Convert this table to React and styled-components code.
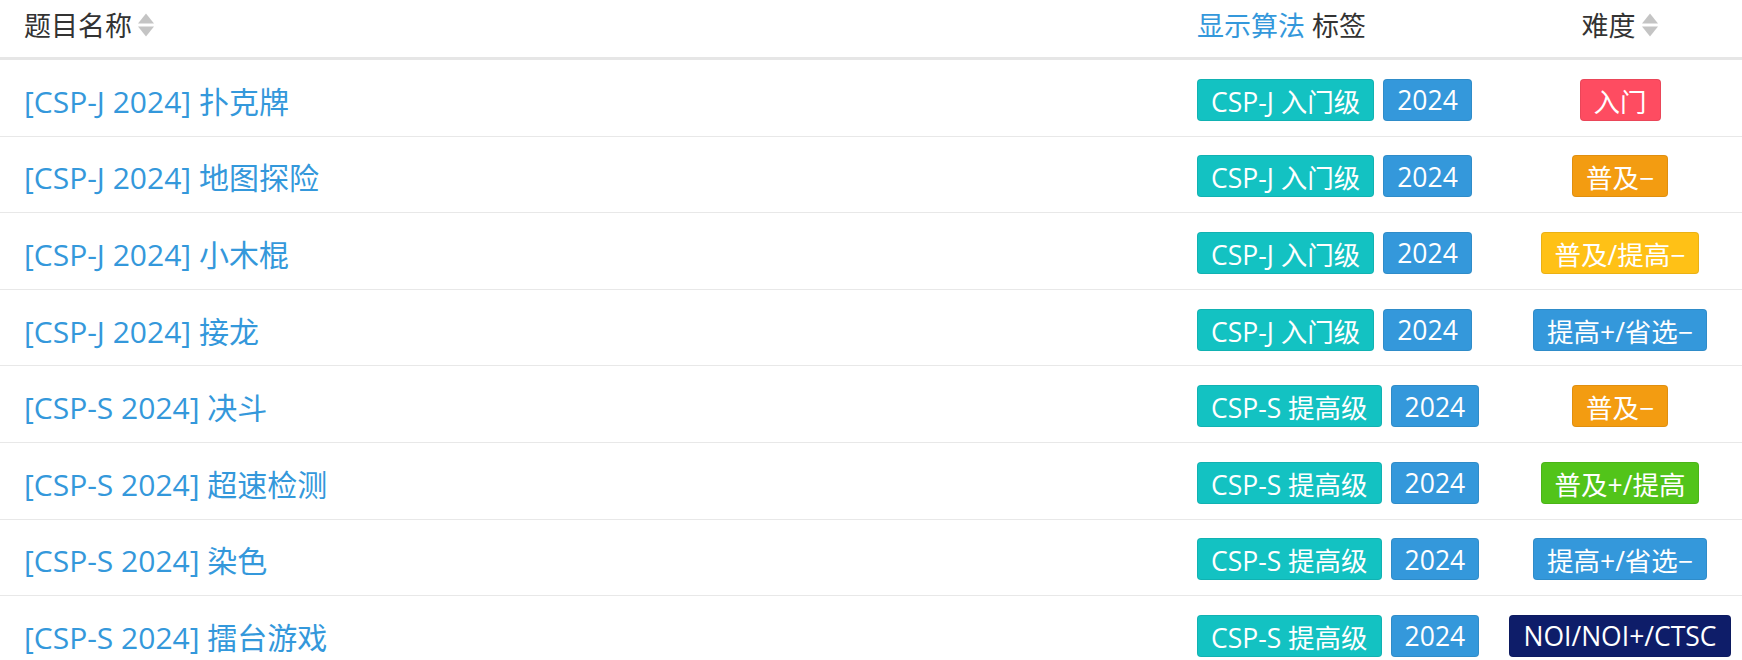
import React from 'react';
import styled, { createGlobalStyle } from 'styled-components';

const GlobalStyle = createGlobalStyle`
  body {
    margin: 0;
    background: #fff;
    font-family: "Open Sans", "Noto Sans CJK SC", sans-serif;
    color: #333;
  }
`;

const problems = [
  { title: '[CSP-J 2024] 扑克牌', level: 'CSP-J 入门级', diff: 0 },
  { title: '[CSP-J 2024] 地图探险', level: 'CSP-J 入门级', diff: 1 },
  { title: '[CSP-J 2024] 小木棍', level: 'CSP-J 入门级', diff: 2 },
  { title: '[CSP-J 2024] 接龙', level: 'CSP-J 入门级', diff: 4 },
  { title: '[CSP-S 2024] 决斗', level: 'CSP-S 提高级', diff: 1 },
  { title: '[CSP-S 2024] 超速检测', level: 'CSP-S 提高级', diff: 3 },
  { title: '[CSP-S 2024] 染色', level: 'CSP-S 提高级', diff: 4 },
  { title: '[CSP-S 2024] 擂台游戏', level: 'CSP-S 提高级', diff: 6 },
];

const difficulties = [
  { name: '入门', color: '#fe4c61' },
  { name: '普及−', color: '#f39c11' },
  { name: '普及/提高−', color: '#ffc116' },
  { name: '普及+/提高', color: '#52c41a' },
  { name: '提高+/省选−', color: '#3498db' },
  { name: '省选/NOI−', color: '#9d3dcf' },
  { name: 'NOI/NOI+/CTSC', color: '#0e1d69' },
];

function SortIcon() {
  return (
    <SortSvg viewBox="0 0 18 24" width="18" height="24">
      <path d="M9 0.5 L17 10.5 L1 10.5 Z" fill="#c4c4c4" />
      <path d="M9 23.5 L17 13.5 L1 13.5 Z" fill="#c4c4c4" />
    </SortSvg>
  );
}

function App() {
  return (
    <>
      <GlobalStyle />
      <Table>
        <HeadRow>
          <HeadCell>
            题目名称<SortIcon />
          </HeadCell>
          <HeadCell>
            <Toggle>显示算法</Toggle>&nbsp;标签
          </HeadCell>
          <HeadCell center>
            难度<SortIcon />
          </HeadCell>
        </HeadRow>
        {problems.map((p) => {
          const d = difficulties[p.diff];
          return (
            <Row key={p.title}>
              <Title>{p.title}</Title>
              <Tags>
                <Tag color="#13c2c2">{p.level}</Tag>
                <Tag color="#3498db">2024</Tag>
              </Tags>
              <DiffCell>
                <Tag color={d.color}>{d.name}</Tag>
              </DiffCell>
            </Row>
          );
        })}
      </Table>
    </>
  );
}

const Table = styled.div`
  width: 100%;
`;

const HeadRow = styled.div`
  display: grid;
  grid-template-columns: 1fr 301px 244px;
  align-items: center;
  height: 60px;
  box-sizing: border-box;
  padding: 0 0 8px 24px;
  border-bottom: 3px solid #e6e6e6;
`;

const HeadCell = styled.div`
  display: flex;
  align-items: center;
  justify-content: ${(p) => (p.center ? 'center' : 'flex-start')};
  font-size: 27px;
  color: #333;
`;

const SortSvg = styled.svg`
  margin-left: 5px;
`;

const Toggle = styled.span`
  color: #3498db;
`;

const Row = styled.div`
  display: grid;
  grid-template-columns: 1fr 301px 244px;
  align-items: center;
  height: 76.6px;
  box-sizing: border-box;
  padding: 4px 0 0 24px;
  border-bottom: 1px solid #e8e8e8;
`;

const Title = styled.a`
  color: #3498db;
  font-size: 30px;
  text-decoration: none;
`;

const Tags = styled.div`
  display: flex;
  gap: 9px;
  white-space: nowrap;
`;

const DiffCell = styled.div`
  display: flex;
  justify-content: center;
`;

const Tag = styled.span`
  display: inline-flex;
  align-items: center;
  box-sizing: border-box;
  height: 42px;
  padding: 1px 13px 0;
  font-size: 26.5px;
  color: #fff;
  background: ${(p) => p.color};
  border: 1px solid rgba(0, 0, 0, 0.08);
  border-radius: 4px;
  white-space: nowrap;
`;

export default App;
